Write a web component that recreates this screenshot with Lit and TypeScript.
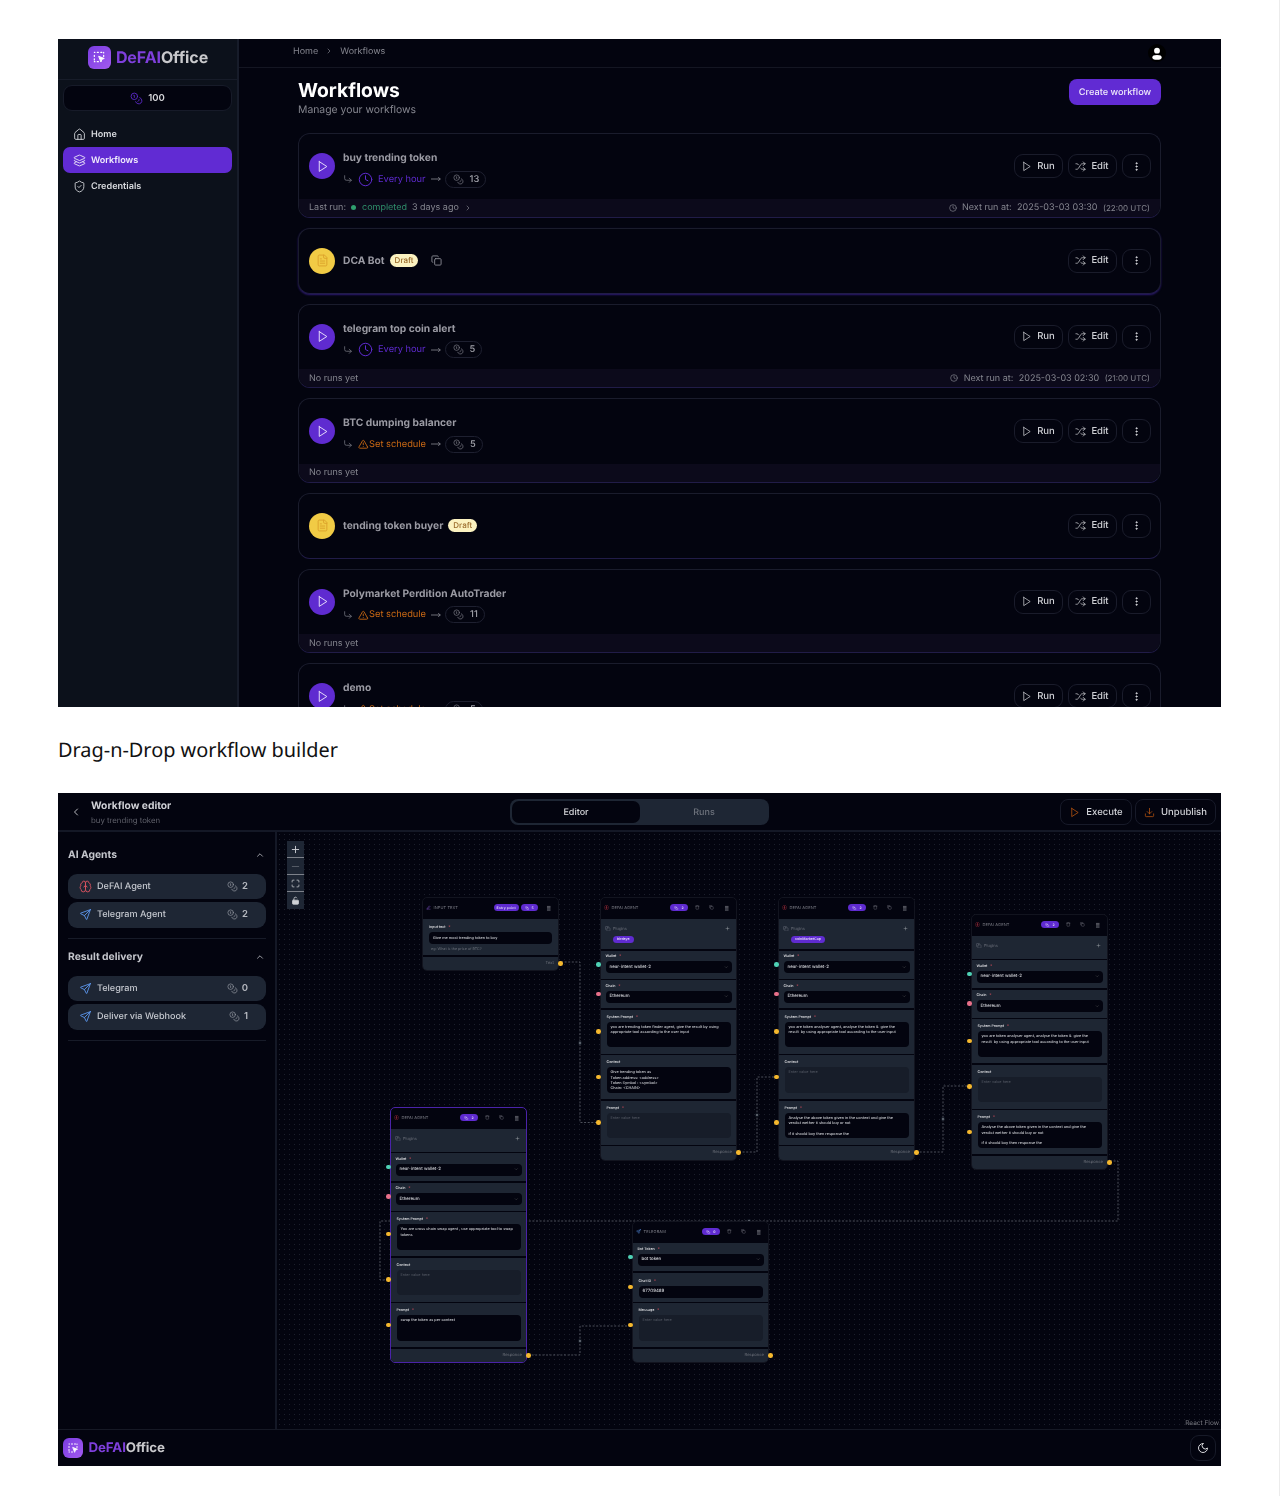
import { LitElement, html, css, svg, nothing } from "lit";
import { customElement } from "lit/decorators.js";

const ic = (body: unknown, cls = "") =>
  html`<svg class="ic ${cls}" viewBox="0 0 24 24" fill="none" stroke="currentColor" stroke-width="2" stroke-linecap="round" stroke-linejoin="round">${body}</svg>`;

const I = {
  home: svg`<path d="M15 21v-8a1 1 0 0 0-1-1h-4a1 1 0 0 0-1 1v8"/><path d="M3 10a2 2 0 0 1 .709-1.528l7-5.999a2 2 0 0 1 2.582 0l7 5.999A2 2 0 0 1 21 10v9a2 2 0 0 1-2 2H5a2 2 0 0 1-2-2z"/>`,
  layers: svg`<path d="m12.83 2.18a2 2 0 0 0-1.66 0L2.6 6.08a1 1 0 0 0 0 1.83l8.58 3.91a2 2 0 0 0 1.66 0l8.58-3.9a1 1 0 0 0 0-1.83Z"/><path d="m6 14.5-3.4 1.6a1 1 0 0 0 0 1.8l8.57 3.9a2 2 0 0 0 1.66 0l8.57-3.9a1 1 0 0 0 0-1.8L18 14.5"/><path d="M2.6 11.5a1 1 0 0 0 0 1l8.57 3.9a2 2 0 0 0 1.66 0l8.57-3.9a1 1 0 0 0 0-1"/>`,
  shield: svg`<path d="M20 13c0 5-3.5 7.5-7.66 8.95a1 1 0 0 1-.67-.01C7.5 20.5 4 18 4 13V6a1 1 0 0 1 1-1c2 0 4.5-1.2 6.24-2.72a1.17 1.17 0 0 1 1.52 0C14.51 3.81 17 5 19 5a1 1 0 0 1 1 1z"/><path d="m9 12 2 2 4-4"/>`,
  play: svg`<polygon points="6 3 20 12 6 21 6 3"/>`,
  shuffle: svg`<path d="m18 14 4 4-4 4"/><path d="m18 2 4 4-4 4"/><path d="M2 18h1.973a4 4 0 0 0 3.3-1.7l5.454-8.6a4 4 0 0 1 3.3-1.7H22"/><path d="M2 6h1.972a4 4 0 0 1 3.6 2.2"/><path d="M22 18h-6.041a4 4 0 0 1-3.3-1.8l-.359-.45"/>`,
  clock: svg`<circle cx="12" cy="12" r="10"/><polyline points="12 6 12 12 16 14"/>`,
  warn: svg`<path d="m21.73 18-8-14a2 2 0 0 0-3.48 0l-8 14A2 2 0 0 0 4 21h16a2 2 0 0 0 1.73-3"/><path d="M12 9v4"/><path d="M12 17h.01"/>`,
  copy: svg`<rect x="8" y="8" width="14" height="14" rx="2"/><path d="M4 16c-1.1 0-2-.9-2-2V4c0-1.1.9-2 2-2h10c1.1 0 2 .9 2 2"/>`,
  file: svg`<path d="M15 2H6a2 2 0 0 0-2 2v16a2 2 0 0 0 2 2h12a2 2 0 0 0 2-2V7Z"/><path d="M14 2v4a2 2 0 0 0 2 2h4"/><path d="M10 9H8"/><path d="M16 13H8"/><path d="M16 17H8"/>`,
  corner: svg`<polyline points="15 10 20 15 15 20"/><path d="M4 4v7a4 4 0 0 0 4 4h12"/>`,
  arrow: svg`<path d="M1 12h21"/><path d="m18 8 4 4-4 4"/>`,
  send: svg`<path d="M10 14 21 3"/><path d="M21 3l-6.5 18a.55.55 0 0 1-1 0l-3.5-7-7-3.5a.55.55 0 0 1 0-1L21 3"/>`,
  brain: svg`<path d="M12 5a3 3 0 1 0-5.997.125 4 4 0 0 0-2.526 5.77 4 4 0 0 0 .556 6.588A4 4 0 1 0 12 18Z"/><path d="M12 5a3 3 0 1 1 5.997.125 4 4 0 0 1 2.526 5.77 4 4 0 0 1-.556 6.588A4 4 0 1 1 12 18Z"/><path d="M15 13a4.5 4.5 0 0 1-3-4 4.5 4.5 0 0 1-3 4"/>`,
  download: svg`<path d="M21 15v4a2 2 0 0 1-2 2H5a2 2 0 0 1-2-2v-4"/><polyline points="7 10 12 15 17 10"/><line x1="12" y1="15" x2="12" y2="3"/>`,
  moon: svg`<path d="M12 3a6 6 0 0 0 9 9 9 9 0 1 1-9-9Z"/>`,
  plus: svg`<path d="M5 12h14"/><path d="M12 5v14"/>`,
  minus: svg`<path d="M5 12h14"/>`,
  corners: svg`<path d="M8 3H5a2 2 0 0 0-2 2v3"/><path d="M21 8V5a2 2 0 0 0-2-2h-3"/><path d="M3 16v3a2 2 0 0 0 2 2h3"/><path d="M16 21h3a2 2 0 0 0 2-2v-3"/>`,
  lock: svg`<rect x="4" y="11" width="16" height="11" rx="2" fill="currentColor"/><path d="M8 11V7a4 4 0 0 1 7.5-2"/>`,
  chevR: svg`<path d="m9 18 6-6-6-6"/>`,
  chevL: svg`<path d="m15 18-6-6 6-6"/>`,
  chevU: svg`<path d="m18 15-6-6-6 6"/>`,
  chevD: svg`<path d="m6 9 6 6 6-6"/>`,
  more: svg`<circle cx="12" cy="5" r="1.4" fill="currentColor"/><circle cx="12" cy="12" r="1.4" fill="currentColor"/><circle cx="12" cy="19" r="1.4" fill="currentColor"/>`,
  coins: svg`<circle cx="8" cy="8" r="6"/><path d="M18.09 10.37A6 6 0 1 1 10.34 18"/><path d="M7 6h1v4"/><path d="m16.71 13.88.7.71-2.82 2.82"/>`,
  trash: svg`<path d="M3 6h18"/><path d="M19 6v14a2 2 0 0 1-2 2H7a2 2 0 0 1-2-2V6"/><path d="M8 6V4a2 2 0 0 1 2-2h4a2 2 0 0 1 2 2v2"/>`,
  grip: svg`<path d="M6 4h12"/><path d="M6 9.500h12"/><path d="M6 15h12"/><path d="M6 20.500h12"/>`,
  pen: svg`<path d="M4 20h16"/><path d="M6 16 16 4l3 3L9 18z"/>`,
  user: svg`<circle cx="12" cy="8" r="5" fill="currentColor" stroke="none"/><ellipse cx="12" cy="19.5" rx="8" ry="4" fill="currentColor" stroke="none"/>`,
  logo: svg`<path d="M4 4h1M9 4h2M15 4h2M4 9v2M4 15v2M4 20h1M9 20h2M20 4v1M20 9v2" stroke-width="2"/><path d="M12 11l9 3.5-4 1.5-1.5 4z" fill="currentColor"/>`,
};

type Card = {
  name: string; draft?: boolean; schedule?: "hour" | "set"; credits?: number;
  last?: boolean; next?: [string, string]; copy?: boolean; clipped?: boolean;
};
const cards: Card[] = [
  { name: "buy trending token", schedule: "hour", credits: 13, last: true, next: ["2025-03-03 03:30", "(22:00 UTC)"] },
  { name: "DCA Bot", draft: true, copy: true },
  { name: "telegram top coin alert", schedule: "hour", credits: 5, next: ["2025-03-03 02:30", "(21:00 UTC)"] },
  { name: "BTC dumping balancer", schedule: "set", credits: 5 },
  { name: "tending token buyer", draft: true },
  { name: "Polymarket Perdition AutoTrader", schedule: "set", credits: 11 },
  { name: "demo", schedule: "set", credits: 5, clipped: true },
];

type Sec =
  | { t: "plugins"; chip?: string }
  | { t: "select"; label: string; value: string; dot: string }
  | { t: "area"; label: string; req?: boolean; text?: string; dot?: string }
  | { t: "input"; label: string; value: string; dot: string }
  | { t: "entry" };
type FlowNode = {
  x: number; y: number; title: string; icon: "brain" | "send" | "pen"; count: number;
  out: string; sel?: boolean; entry?: boolean; secs: Sec[];
};

const SYS1 = "you are trending token finder agent, give the result by using appropriate tool according to the user input";
const SYS2 = "you are token analyser agent, analyse the token &  give the result  by using appropriate tool according to the user input";
const PROMPT = "Analyse the above token given in the context and give the verdict wether it should buy or not\n\nif it should buy then response the";
const CTX = "Give trending token as\nToken address: <address>\nToken Symbol : <symbol>\nChain: <CHAIN>";
const agent = (chip: string | undefined, sys: string, ctx: string | undefined, prompt: string | undefined): Sec[] => [
  { t: "plugins", chip },
  { t: "select", label: "Wallet", value: "near-intent wallet-2", dot: "teal" },
  { t: "select", label: "Chain", value: "Ethereum", dot: "pink" },
  { t: "area", label: "System Prompt", req: true, text: sys, dot: "yel" },
  { t: "area", label: "Context", text: ctx, dot: "yel" },
  { t: "area", label: "Prompt", req: true, text: prompt, dot: "yel" },
];
const nodes: FlowNode[] = [
  { x: 146, y: 66, title: "INPUT TEXT", icon: "pen", count: 5, out: "Text", entry: true, secs: [{ t: "entry" }] },
  { x: 324, y: 66, title: "DEFAI AGENT", icon: "brain", count: 2, out: "Response", secs: agent("birdeye", SYS1, CTX, undefined) },
  { x: 502, y: 66, title: "DEFAI AGENT", icon: "brain", count: 2, out: "Response", secs: agent("coinMarketCap", SYS2, undefined, PROMPT) },
  { x: 695, y: 83, title: "DEFAI AGENT", icon: "brain", count: 2, out: "Response", secs: agent(undefined, SYS2, undefined, PROMPT) },
  { x: 114, y: 276, title: "DEFAI AGENT", icon: "brain", count: 2, out: "Response", sel: true, secs: agent(undefined, "You are cross chain swap agent , use appropriate tool to swap tokens", undefined, "swap the token as per context") },
  { x: 356, y: 390, title: "TELEGRAM", icon: "send", count: 0, out: "Response", secs: [
    { t: "select", label: "Bot Token", value: "bot token", dot: "teal" },
    { t: "input", label: "Chat ID", value: "67709489", dot: "yel" },
    { t: "area", label: "Message", req: true, dot: "yel" },
  ] },
];

const edges = [
  { d: "M284 130H303V290.500H322", m: [303, 211] },
  { d: "M462 320H480V245H499", m: [480, 283] },
  { d: "M639 320H666V254H693", m: [666, 287] },
  { d: "M833 329H841V389H103V448H112", m: [472, 389] },
  { d: "M251 523H303V494H354", m: [303, 509] },
];

@customElement("app-root")
export class AppRoot extends LitElement {
  static styles = css`
    :host { display: block; width: 1280px; height: 1496px; background: #fff; box-sizing: border-box;
      border-right: 1px solid #ececec; padding: 39px 0 0 58px; font-family: Inter, "Liberation Sans", sans-serif; text-rendering: geometricPrecision; }
    * { box-sizing: border-box; }
    .ic { display: block; flex: none; width: 12px; height: 12px; }
    .frame { width: 1163px; background: #03040f; overflow: hidden; filter: blur(.35px); }
    .f1 { height: 668px; display: flex; }
    .f2 { height: 673px; display: flex; flex-direction: column; }
    .caption { height: 86px; display: flex; align-items: center; font: 400 19.9px "Noto Sans", sans-serif; color: #111; padding-bottom: 2px; }

    .side { width: 181px; flex: none; background: #0c111b; border-right: 2px solid #171c2a; }
    .logo-row { height: 41px; border-bottom: 1px solid #171c29; display: flex; align-items: center; justify-content: center; gap: 5px; padding: 0 0 4px 1px; }
    .logo { width: 23px; height: 23px; border-radius: 6px; background: linear-gradient(135deg, #7a3ce0, #a25af0); color: #fff; display: grid; place-items: center; flex: none; }
    .logo .ic { width: 14px; height: 14px; stroke-width: 1.6; }
    .wordmark { font-size: 16px; font-weight: 700; letter-spacing: -.1px; color: #c9c9cc; }
    .wordmark b { color: #7f3fdc; font-weight: 700; }
    .credit { margin: 5px 5px 0 5px; height: 26px; border-radius: 9px; background: #03040f; border: 1px solid #171b29; display: flex; align-items: center; justify-content: center; gap: 5px; font-size: 9.5px; font-weight: 600; color: #d6d6da; }
    .credit .ic { color: #5f2bd0; width: 13px; height: 13px; stroke-width: 1.6; }
    .nav { margin: 10px 5px 0 5px; display: flex; flex-direction: column; }
    .nav div { height: 26px; border-radius: 7px; display: flex; align-items: center; gap: 5px; padding-left: 10px; font-size: 9.1px; font-weight: 600; color: #d8dade; }
    .nav .on { background: #612bd3; color: #f2eefc; }
    .nav .ic { width: 13px; height: 13px; stroke-width: 1.6; }

    .main { flex: 1; min-width: 0; }
    .topbar { height: 29px; border-bottom: 1px solid #141622; display: flex; align-items: center; padding: 0 55px 4px 54px; font-size: 9px; color: #85868f; gap: 7px; }
    .topbar .ic { width: 8px; height: 8px; }
    .me { margin-left: auto; width: 18px; height: 18px; border-radius: 50%; background: #000; color: #fff; display: grid; place-items: center; margin-top: 3px; }
    .me .ic { width: 14px; height: 14px; }
    .content { padding: 11px 60px 0 59px; }
    .head { display: flex; justify-content: space-between; height: 54px; }
    h1 { margin: 1px 0 0; font-size: 19.3px; line-height: 20px; font-weight: 700; color: #fff; }
    .sub { font-size: 10.4px; line-height: 13px; margin-top: 3px; color: #84858e; }
    .create { height: 26px; width: 92px; border-radius: 8px; background: #612bd3; color: #efeafb; font-size: 9.2px; font-weight: 500; display: grid; place-items: center; }
    .cards { display: flex; flex-direction: column; gap: 10px; }
    .card { border: 1px solid #1a1c2c; border-bottom-color: #211c48; border-radius: 12px; overflow: hidden; background: #03040f; flex: none; }
    .row { height: 64.5px; display: flex; align-items: center; padding: 0 9.5px 0 10px; gap: 8px; }
    .draft .row { height: 64px; }
    .card.glow { box-shadow: 0 1px 2px #2d1a72; }
    .av { width: 26px; height: 26px; border-radius: 50%; background: #5f2bd0; color: #e6dcfb; display: grid; place-items: center; flex: none; }
    .av .ic { width: 13px; height: 13px; stroke-width: 1.8; }
    .av.y { background: #f1cb45; color: #dca42c; }
    .name { font-size: 10.25px; line-height: 14px; font-weight: 700; color: #9a9aa3; }
    .info { padding-top: 6.5px; }
    .sched { display: flex; align-items: center; margin-top: 5.5px; font-size: 9.3px; height: 17px; }
    .sched > .ic { color: #6f7079; width: 10px; height: 10px; margin-right: 5px; }
    .hour { color: #5f2bd0; display: flex; align-items: center; gap: 5px; }
    .hour .ic { width: 15px; height: 15px; stroke-width: 1.6; }
    .set { color: #cc6a14; display: flex; align-items: center; gap: .5px; }
    .set .ic { width: 10.5px; height: 10.5px; }
    .sched > .to { color: #84858e; width: 10px; margin: 0 4px 0 5px; }
    .pill { height: 17px; border: 1px solid #1e2030; border-radius: 9px; display: flex; align-items: center; gap: 6px; padding: 0 6px 0 7px; color: #a2a3ab; font-size: 9.3px; font-weight: 500; }
    .pill .ic { width: 11px; height: 11px; stroke-width: 1.5; color: #7d7e87; }
    .badge { background: #fbf2c0; color: #9a6a2a; font-size: 8px; font-weight: 500; border-radius: 7px; padding: 0 5px; height: 13px; line-height: 13px; margin-left: -3px; }
    .dup { color: #8a8b94; width: 11px; height: 11px; margin-left: 5px; }
    .acts { margin-left: auto; display: flex; gap: 5px; }
    .btn { height: 24px; width: 49px; border: 1px solid #1a1c2b; border-radius: 9px; display: flex; align-items: center; justify-content: center; gap: 5px; color: #cfd0d5; font-size: 9.5px; font-weight: 500; }
    .btn .ic { width: 11px; height: 11px; stroke-width: 1.6; }
    .btn.m { width: 29px; }
    .foot { height: 18px; background: #0c0a1b; padding: 0 10px; display: flex; align-items: center; font-size: 9px; color: #85868f; gap: 5px; }
    .done { color: #2f8f6b; display: flex; align-items: center; gap: 6px; }
    .done::before { content: ""; width: 5px; height: 5px; border-radius: 50%; background: #2f9e6e; }
    .foot .chev { width: 8px; height: 8px; }
    .foot .rt { margin-left: auto; display: flex; align-items: center; gap: 5.5px; }
    .foot .rt .ic { width: 8px; height: 8px; }
    .foot small { font-size: 8px; color: #85868f; }

    .ehead { height: 39px; flex: none; border-bottom: 2px solid #141826; display: grid; grid-template-columns: 1fr 259px 1fr; align-items: center; padding: 1px 5px 0; }
    .back { display: flex; align-items: center; gap: 9px; margin-left: 7px; }
    .back > div { padding-top: 2px; }
    .back .ic { width: 12px; height: 12px; color: #b7b8be; }
    .et { font-size: 10.25px; font-weight: 700; color: #cfd0d5; line-height: 13px; }
    .es { font-size: 7.8px; color: #5f606a; line-height: 11px; margin-top: 2px; }
    .tabs { height: 26px; background: #1e2634; border-radius: 8px; display: grid; grid-template-columns: 130px 1fr; font-size: 9px; font-weight: 500; color: #6d727c; align-items: center; text-align: center; padding: 2px 3px 2px 2px; }
    .tabs .on { background: #03040f; color: #d8d9dd; height: 22px; line-height: 23px; border-radius: 7px; width: 128px; }
    .eacts { display: flex; justify-content: flex-end; gap: 3px; }
    .ebtn { height: 26px; border: 1px solid #171a29; border-radius: 8px; display: flex; align-items: center; justify-content: center; gap: 6px; color: #d0d1d6; font-size: 9.5px; font-weight: 500; }
    .ebtn .ic { color: #c2590f; width: 11px; height: 11px; stroke-width: 1.6; }
    .w72 { width: 72px; } .w81 { width: 81px; }

    .body { flex: 1; display: flex; min-height: 0; }
    .panel { width: 219px; flex: none; border-right: 2px solid #141826; padding: 0 9px 0 10px; }
    .ptitle { display: flex; justify-content: space-between; align-items: center; font-size: 10.3px; font-weight: 700; color: #c4c6cc; height: 14px; }
    .ptitle .ic { width: 10px; height: 10px; color: #b7b8be; margin-right: 1px; }
    .psec { padding-top: 16px; padding-bottom: 10px; border-bottom: 1px solid #171b28; }
    .psec + .psec { padding-top: 11.5px; }
    .items { display: flex; flex-direction: column; gap: 3px; margin-top: 11.5px; }
    .item { height: 25.5px; border-radius: 9px; background: #1e2634; display: flex; align-items: center; padding: 0 18px 0 11px; font-size: 9.1px; font-weight: 500; color: #c5c8cf; gap: 5px; }
    .item > .ic { width: 13px; height: 13px; stroke-width: 1.7; }
    .item .blue { color: #5a93e8; }
    .item .red { color: #d9525f; }
    .item .n { margin-left: auto; display: flex; gap: 4px; align-items: center; font-weight: 600; font-size: 9.5px; color: #b6b9c0; }
    .item .n .ic { width: 11px; height: 11px; stroke-width: 1.5; color: #9599a2; }

    .canvas { flex: 1; position: relative; overflow: hidden;
      background-color: #03040f; background-image: radial-gradient(circle, #1c1f2b .7px, transparent 1px); background-size: 5px 5px; }
    .wires { position: absolute; inset: 0; width: 100%; height: 100%; }
    .ctrl { position: absolute; left: 10px; top: 9px; width: 17px; background: #1e2634; color: #cfd1d6; }
    .ctrl div { height: 17px; display: grid; place-items: center; border-bottom: 1px solid #7d818a; }
    .ctrl div:last-child { border-bottom: 0; }
    .ctrl .ic { width: 11px; height: 11px; }
    .ctrl .dim { color: #5b606b; }
    .ctrl .sm { width: 9px; height: 9px; }
    .rf { position: absolute; right: 2px; bottom: 2px; font-size: 6.5px; color: #7a7b82; }

    .node { position: absolute; width: 135px; background: #03040f; border-radius: 4px; outline: 1px solid #12141f; display: flex; flex-direction: column; gap: 1.5px; font-size: 3.8px; color: #c3c5ca; }
    .node.sel { outline: 1px solid #4a23a8; }
    .nh { height: 19.5px; display: flex; align-items: center; padding: 0 7px 0 3px; gap: 1px; color: #7e7f88; font-size: 4px; letter-spacing: .1px; }
    .nh .ti { width: 5px; height: 5px; margin-right: 1.5px; color: #a0303c; }
    .nh .ti.send { color: #5a93e8; }
    .nh .ti.pen { color: #8a5bd8; }
    .nh .r { margin-left: auto; display: flex; align-items: center; gap: 9.5px; color: #7e7f88; }
    .nh .r .ic { width: 4.6px; height: 4.6px; }
    .nh .r .gr { width: 5.5px; height: 6.5px; stroke-width: 3; }
    .nh .tag { background: #5f2bd0; color: #d9cdf6; border-radius: 3.5px; height: 7px; min-width: 17.5px; display: flex; align-items: center; justify-content: center; gap: 2.5px; padding: 0 3px; font-weight: 700; font-size: 3.4px; }
    .nh .tag .ic { width: 4.4px; height: 4.4px; }
    .nh .tags { display: flex; gap: 1.7px; margin-right: -2px; }
    .sec { background: #1e2633; position: relative; padding: 0 4.5px; }
    .sec.plug { height: 30px; padding: 6.5px 6px 0 4px; }
    .sec.plug.bare { height: 22.5px; }
    .sec.sel2 { height: 28px; padding-top: 3.5px; }
    .sec.ar { height: 44px; padding: 5px 5.5px 0; }
    .sec.inp { height: 29px; padding: 6px 5.5px 0; }
    .sec.ent { height: 36px; padding: 5.5px 6px 0; }
    .lab { font-size: 3.6px; font-weight: 600; line-height: 5px; color: #d5d6da; }
    .lab i { font-style: normal; color: #e0505f; margin-left: 2px; }
    .field { background: #03040f; border-radius: 4px; color: #d0d2d7; display: flex; align-items: center; justify-content: space-between; margin-top: 2px; height: 12px; padding: 0 3px 0 4px; font-size: 4.4px; font-weight: 500; }
    .ent .field { font-size: 3.8px; }
    .field .ic { width: 4.5px; height: 4.5px; color: #666; }
    .ta { background: #03040f; border-radius: 4px; height: 25.5px; margin-top: 2px; padding: 2.4px 4px; font-size: 3.8px; font-weight: 500; line-height: 5.2px; white-space: pre-wrap; color: #d0d2d7; overflow: hidden; }
    .ta.empty { background: #171d29; color: #565b66; font-weight: 400; }
    .plughead { display: flex; align-items: center; justify-content: space-between; color: #6f737d; font-size: 4px; }
    .plughead span { display: flex; align-items: center; gap: 2.5px; }
    .plughead .ic { width: 5.5px; height: 5.5px; }
    .plughead .add { color: #a6a9b0; width: 5px; height: 5px; }
    .chip { display: inline-block; background: #5f2bd0; color: #e2d8f9; font-size: 3.5px; font-weight: 600; height: 7px; line-height: 7px; border-radius: 3.5px; padding: 0 4px; margin: 5px 0 0 8px; }
    .hint { color: #6b707a; margin-top: 2px; padding-left: 2px; font-size: 3.7px; }
    .nf { height: 13.5px; background: #1e2633; display: flex; justify-content: flex-end; align-items: center; padding: 0 4px; color: #6d717b; font-size: 4.2px; border-radius: 0 0 4px 4px; position: relative; }
    .dot { position: absolute; width: 4.6px; height: 4.6px; border-radius: 50%; top: 50%; margin-top: -2.3px; left: -4.7px; }
    .nf .dot { left: auto; right: -5px; background: #f5b82e; }
    .yel { background: #f5b82e; } .teal { background: #4fd1b5; } .pink { background: #e8708a; }

    .bottom { height: 37px; flex: none; border-top: 1px solid #161925; display: flex; align-items: center; padding: 0 5px 1px; gap: 5.5px; }
    .bottom .logo { width: 20px; height: 20px; }
    .bottom .logo .ic { width: 12px; height: 12px; }
    .bottom .wordmark { font-size: 13.3px; }
    .moon { margin-left: auto; width: 26px; height: 26px; border: 1px solid #171a28; border-radius: 9px; display: grid; place-items: center; color: #d8d9dd; }
    .moon .ic { width: 12px; height: 12px; }
  `;

  private renderCard(c: Card) {
    const next = c.next;
    return html`<div class="card ${c.draft ? "draft" : ""} ${c.copy ? "glow" : ""}">
      <div class="row">
        <div class="av ${c.draft ? "y" : ""}">${ic(c.draft ? I.file : I.play)}</div>
        ${c.draft
          ? html`<div class="name">${c.name}</div><span class="badge">Draft</span>${c.copy ? ic(I.copy, "dup") : nothing}`
          : html`<div class="info"><div class="name">${c.name}</div>
              <div class="sched">${ic(I.corner)}
                ${c.schedule === "hour"
                  ? html`<span class="hour">${ic(I.clock)}Every hour</span>`
                  : html`<span class="set">${ic(I.warn)}Set schedule</span>`}
                ${ic(I.arrow, "to")}
                <span class="pill">${ic(I.coins)}${c.credits}</span>
              </div></div>`}
        <div class="acts">
          ${c.draft ? nothing : html`<div class="btn">${ic(I.play)}Run</div>`}
          <div class="btn">${ic(I.shuffle)}Edit</div>
          <div class="btn m">${ic(I.more)}</div>
        </div>
      </div>
      ${c.draft || c.clipped ? nothing : html`<div class="foot">
        ${c.last
          ? html`<span>Last run:</span><span class="done">completed</span><span>3 days ago</span>${ic(I.chevR, "chev")}`
          : html`<span>No runs yet</span>`}
        ${next ? html`<span class="rt">${ic(I.clock)}<span>Next run at:</span><span>${next[0]}</span><small>${next[1]}</small></span>` : nothing}
      </div>`}
    </div>`;
  }

  private renderSec(s: Sec) {
    const req = html`<i>*</i>`;
    switch (s.t) {
      case "plugins":
        return html`<div class="sec plug ${s.chip ? "" : "bare"}">
          <div class="plughead"><span>${ic(I.copy)}Plugins</span>${ic(I.plus, "add")}</div>
          ${s.chip ? html`<span class="chip">${s.chip}</span>` : nothing}
        </div>`;
      case "select":
        return html`<div class="sec sel2"><span class="dot ${s.dot}"></span>
          <div class="lab">${s.label} ${req}</div>
          <div class="field">${s.value}${ic(I.chevD)}</div></div>`;
      case "input":
        return html`<div class="sec inp"><span class="dot ${s.dot}"></span>
          <div class="lab">${s.label} ${req}</div>
          <div class="field">${s.value}</div></div>`;
      case "area":
        return html`<div class="sec ar">${s.dot ? html`<span class="dot ${s.dot}"></span>` : nothing}
          <div class="lab">${s.label} ${s.req ? req : nothing}</div>
          <div class="ta ${s.text ? "" : "empty"}">${s.text ?? "Enter value here"}</div></div>`;
      case "entry":
        return html`<div class="sec ent">
          <div class="lab">Input text ${req}</div>
          <div class="field">Give me most trending token to buy</div>
          <div class="hint">eg: What is the price of BTC?</div></div>`;
    }
  }

  private renderNode(n: FlowNode) {
    return html`<div class="node ${n.sel ? "sel" : ""}" style="left:${n.x}px;top:${n.y}px">
      <div class="nh">${ic(I[n.icon], `ti ${n.icon}`)}<span>${n.title}</span>
        <div class="r">
          <div class="tags">
            ${n.entry ? html`<span class="tag">Entry point</span>` : nothing}
            <span class="tag">${ic(I.coins)}${n.count}</span>
          </div>
          ${n.entry ? nothing : html`${ic(I.trash)}${ic(I.copy)}`}
          ${ic(I.grip, "gr")}
        </div>
      </div>
      ${n.secs.map((s) => this.renderSec(s))}
      <div class="nf">${n.out}<span class="dot"></span></div>
    </div>`;
  }

  render() {
    const item = (icon: unknown, cls: string, label: string, n: number) =>
      html`<div class="item">${ic(icon, cls)}<span>${label}</span><span class="n">${ic(I.coins)}${n}</span></div>`;
    return html`
      <div class="frame f1">
        <aside class="side">
          <div class="logo-row"><div class="logo">${ic(I.logo)}</div><div class="wordmark"><b>DeFAI</b>Office</div></div>
          <div class="credit">${ic(I.coins)}100</div>
          <nav class="nav">
            <div>${ic(I.home)}Home</div>
            <div class="on">${ic(I.layers)}Workflows</div>
            <div>${ic(I.shield)}Credentials</div>
          </nav>
        </aside>
        <div class="main">
          <div class="topbar"><span>Home</span>${ic(I.chevR)}<span>Workflows</span><div class="me">${ic(I.user)}</div></div>
          <div class="content">
            <div class="head">
              <div><h1>Workflows</h1><div class="sub">Manage your workflows</div></div>
              <div class="create">Create workflow</div>
            </div>
            <div class="cards">${cards.map((c) => this.renderCard(c))}</div>
          </div>
        </div>
      </div>

      <div class="caption">Drag-n-Drop workflow builder</div>

      <div class="frame f2">
        <div class="ehead">
          <div class="back">${ic(I.chevL)}<div><div class="et">Workflow editor</div><div class="es">buy trending token</div></div></div>
          <div class="tabs"><div class="on">Editor</div><div>Runs</div></div>
          <div class="eacts">
            <div class="ebtn w72">${ic(I.play)}Execute</div>
            <div class="ebtn w81">${ic(I.download)}Unpublish</div>
          </div>
        </div>
        <div class="body">
          <div class="panel">
            <div class="psec">
              <div class="ptitle">AI Agents${ic(I.chevU)}</div>
              <div class="items">${item(I.brain, "red", "DeFAI Agent", 2)}${item(I.send, "blue", "Telegram Agent", 2)}</div>
            </div>
            <div class="psec">
              <div class="ptitle">Result delivery${ic(I.chevU)}</div>
              <div class="items">${item(I.send, "blue", "Telegram", 0)}${item(I.send, "blue", "Deliver via Webhook", 1)}</div>
            </div>
          </div>
          <div class="canvas">
            <svg class="wires" fill="none">
              ${edges.map((e) => svg`<path d=${e.d} stroke="#6d717b" stroke-width=".7" stroke-dasharray="2 1.6"/>
                <rect x=${e.m[0] - 1.5} y=${e.m[1] - 1.5} width="3" height="3" fill="#1e2633"/>
                <circle cx=${e.m[0]} cy=${e.m[1]} r=".7" fill="#c3c5ca"/>`)}
            </svg>
            <div class="ctrl">
              <div>${ic(I.plus)}</div>
              <div class="dim">${ic(I.minus)}</div>
              <div>${ic(I.corners, "sm")}</div>
              <div>${ic(I.lock, "sm")}</div>
            </div>
            ${nodes.map((n) => this.renderNode(n))}
            <div class="rf">React Flow</div>
          </div>
        </div>
        <div class="bottom">
          <div class="logo">${ic(I.logo)}</div><div class="wordmark"><b>DeFAI</b>Office</div>
          <div class="moon">${ic(I.moon)}</div>
        </div>
      </div>
    `;
  }
}
